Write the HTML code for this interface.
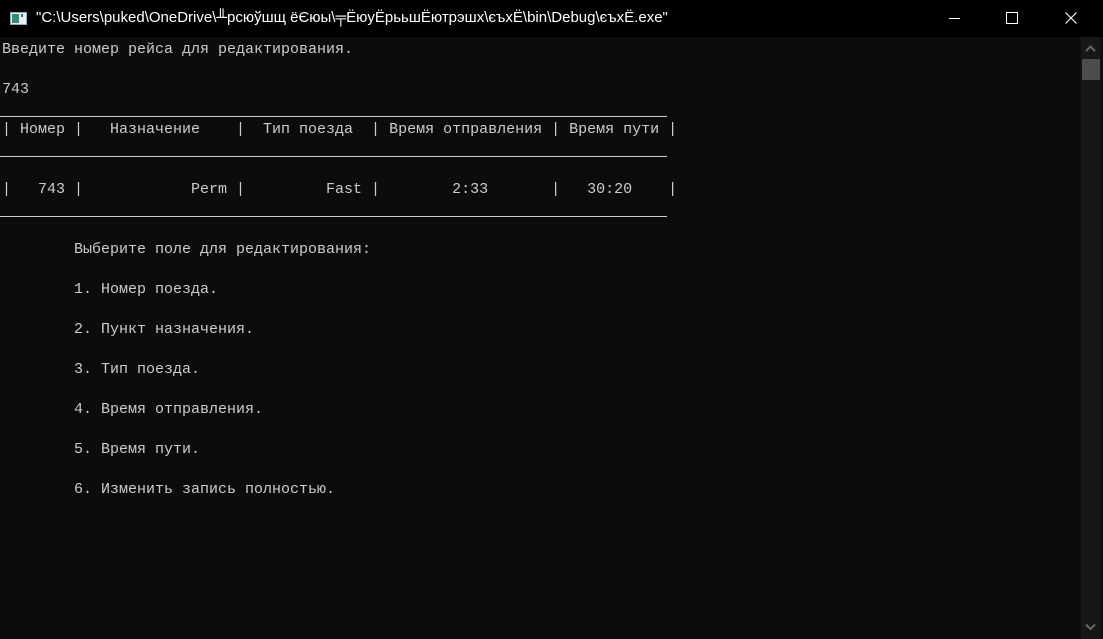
<!DOCTYPE html>
<html><head><meta charset="utf-8"><style>
html,body{margin:0;padding:0;width:1103px;height:639px;overflow:hidden;background:#0c0c0c}
#title{position:absolute;left:0;top:0;width:1103px;height:37px;background:#000}
#title .t{position:absolute;left:36px;top:9px;color:#fff;font:15px "Liberation Sans","DejaVu Sans",sans-serif;white-space:nowrap;letter-spacing:0px}
#con{position:absolute;left:2px;top:40px;margin:0;color:#cccccc;font:15px/20px "Liberation Mono","DejaVu Sans Mono",monospace;white-space:pre}
.hr{position:absolute;left:0;width:667px;height:1px;background:#cccccc}
#sb{position:absolute;left:1081px;top:37px;width:20px;height:602px;background:#171717}
#thumb{position:absolute;left:1082px;top:59px;width:18px;height:21px;background:#4d4d4d}
</style></head><body>
<div id="title">
<svg style="position:absolute;left:10px;top:12px" width="17" height="13"><rect x="0.5" y="0.5" width="16" height="12" fill="#e8eef2" stroke="#9ab"/><rect x="2" y="2" width="7" height="9" fill="#3a8a7a"/><rect x="11" y="2" width="2" height="3" fill="#3a6aa0"/></svg>
<div class="t">"C:\Users\puked\OneDrive\╨рсюўшщ ёЄюы\╤ЁюуЁрььшЁютрэшх\єъхЁ\bin\Debug\єъхЁ.exe"</div>
<svg style="position:absolute;left:949px;top:18px" width="12" height="2"><rect width="11" height="1" fill="#fff"/></svg>
<svg style="position:absolute;left:1006px;top:12px" width="13" height="13"><rect x="0.5" y="0.5" width="11" height="11" fill="none" stroke="#fff"/></svg>
<svg style="position:absolute;left:1065px;top:12px" width="13" height="13"><path d="M0.5 0.5L11.5 11.5M11.5 0.5L0.5 11.5" stroke="#fff" stroke-width="1.1"/></svg>
</div>
<pre id="con">Введите номер рейса для редактирования.

743

| Номер |   Назначение    |  Тип поезда  | Время отправления | Время пути |


|   743 |            Perm |         Fast |        2:33       |   30:20    |


        Выберите поле для редактирования:

        1. Номер поезда.

        2. Пункт назначения.

        3. Тип поезда.

        4. Время отправления.

        5. Время пути.

        6. Изменить запись полностью.</pre>
<div class="hr" style="top:116px"></div>
<div class="hr" style="top:156px"></div>
<div class="hr" style="top:216px"></div>
<div id="sb"></div>
<div id="thumb"></div>
<svg style="position:absolute;left:1085px;top:45px" width="12" height="8"><path d="M1 6L5.5 1.5L10 6" stroke="#666" stroke-width="2" fill="none"/></svg>
<svg style="position:absolute;left:1085px;top:623px" width="12" height="8"><path d="M1 1.5L5.5 6L10 1.5" stroke="#666" stroke-width="2" fill="none"/></svg>
</body></html>
